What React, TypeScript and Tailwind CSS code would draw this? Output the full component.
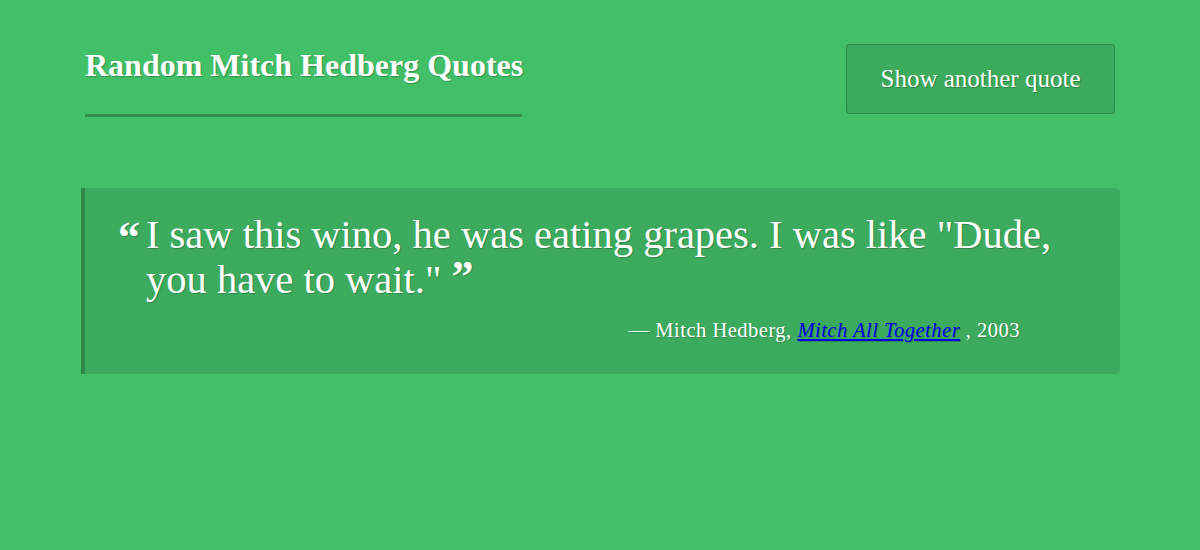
const serif = "font-['Liberation_Serif','Times_New_Roman',serif]";

export default function App() {
  return (
    <div className={`w-full h-[550px] bg-[#42c067] text-white ${serif}`}>
      <div className="w-[1039px] ml-[81px] pt-[44px]">
        <header className="flex justify-between items-start pl-[4px] pr-[5px]">
          <h1 className="w-[437px] pt-[2px] pb-[29px] border-b-[3px] border-[#2f8f4b] text-[32px] font-bold leading-[39px] whitespace-nowrap [text-shadow:1px_1px_1px_rgba(0,0,0,0.25)]">
            Random Mitch Hedberg Quotes
          </h1>
          <button className="w-[269px] h-[70px] bg-[#3cab5c] border border-[#2b8545] rounded-[3px] text-[25px] [text-shadow:1px_1px_1px_rgba(0,0,0,0.25)]">
            Show another quote
          </button>
        </header>

        <blockquote className="mt-[71px] h-[186px] bg-[#3dab5e] border-l-4 border-[#2f8a49] rounded-r-[4px] pt-[24px] pl-[33px] pr-[40px]">
          <div className="flex items-start [text-shadow:1px_1px_1px_rgba(0,0,0,0.2)]">
            <span className="text-[44px] font-bold leading-[44px] mt-[4px] mr-[6px]">&ldquo;</span>
            <p className="text-[40.5px] leading-[45px]">
              I saw this wino, he was eating grapes. I was like "Dude,
              <br />
              you have to wait."{' '}
              <span className="inline-block align-top h-[24px] leading-[40px] text-[44px] font-bold">&rdquo;</span>
            </p>
          </div>
          <p className="mt-[13px] pr-[60px] text-right text-[20.5px] tracking-[0.5px] [text-shadow:1px_1px_1px_rgba(0,0,0,0.2)]">
            — Mitch Hedberg, <a href="#" className="italic text-[#0000ee] underline">Mitch All Together</a> , 2003
          </p>
        </blockquote>
      </div>
    </div>
  );
}
